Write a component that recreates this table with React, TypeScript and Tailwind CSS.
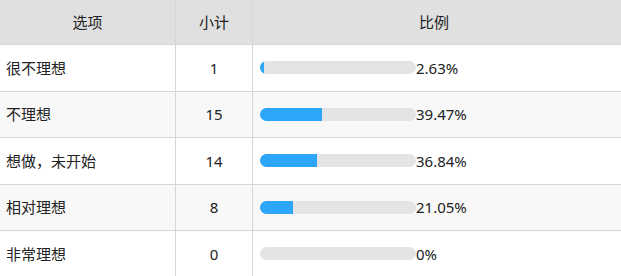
const rows = [
  { label: "很不理想", count: 1, pct: "2.63%", w: 2.63 },
  { label: "不理想", count: 15, pct: "39.47%", w: 39.47 },
  { label: "想做，未开始", count: 14, pct: "36.84%", w: 36.84 },
  { label: "相对理想", count: 8, pct: "21.05%", w: 21.05 },
  { label: "非常理想", count: 0, pct: "0%", w: 0 },
];

const cols = "grid grid-cols-[176px_77px_1fr]";

export default function App() {
  return (
    <div
      className="w-[621px] h-[276px] overflow-hidden bg-white text-[15px] text-[#222]"
      style={{ fontFamily: '"Noto Sans", "Noto Sans CJK SC", sans-serif' }}
    >
      <div className={`${cols} h-[45px] bg-[#e0e0e0] border-b border-[#d6d6d6]`}>
        <div className="flex items-center justify-center border-r border-[#d6d6d6]">选项</div>
        <div className="flex items-center justify-center border-r border-[#d6d6d6]">小计</div>
        <div className="flex items-center justify-center pr-[6px]">比例</div>
      </div>
      {rows.map((r, i) => (
        <div
          key={r.label}
          className={`${cols} h-[46.5px] border-b border-[#d6d6d6] ${
            i % 2 === 1 ? "bg-[#f8f8f8]" : "bg-white"
          }`}
        >
          <div className="flex items-center pl-[6px] border-r border-[#d6d6d6]">{r.label}</div>
          <div className="flex items-center justify-center border-r border-[#d6d6d6]">{r.count}</div>
          <div className="flex items-center pl-[7px]">
            <div className="w-[156px] h-[13px] rounded-full bg-[#e3e4e6] overflow-hidden">
              <div className="h-full bg-[#2ea6f7]" style={{ width: `${r.w}%` }} />
            </div>
            <span>{r.pct}</span>
          </div>
        </div>
      ))}
    </div>
  );
}
